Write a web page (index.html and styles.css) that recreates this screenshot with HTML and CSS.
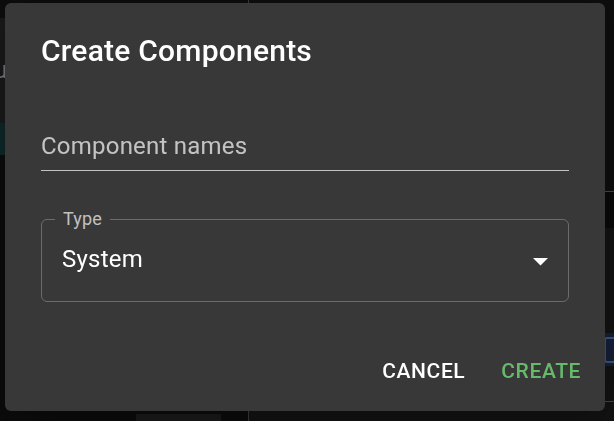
FILE: index.html
```html
<!DOCTYPE html>
<html lang="en">
<head>
<meta charset="utf-8">
<title>Create Components</title>
<link rel="stylesheet" href="styles.css">
</head>
<body>
<div class="app">
  <aside class="side">
    <div class="side-top"></div>
    <div class="side-panel"><span class="side-text">Menu</span></div>
    <div class="side-active"></div>
    <div class="side-fill"></div>
    <div class="side-foot"><div class="foot-block"></div></div>
  </aside>
  <main class="main">
    <div class="toolbar"></div>
    <div class="main-gap"></div>
    <div class="panel">
      <div class="panel-space"></div>
      <div class="panel-row"><span class="row-icon"></span></div>
      <div class="panel-space2"></div>
    </div>
  </main>
</div>

<div class="backdrop">
  <div class="dialog" role="dialog">
    <h2 class="dlg-title">Create Components</h2>
    <div class="dlg-content">
      <div class="field-std">
        <div class="std-input"><span class="std-label">Component names</span></div>
      </div>
      <div class="field-out">
        <span class="out-label">Type</span>
        <div class="select-value">System</div>
        <svg class="arrow" width="15" height="8" viewBox="0 0 15 8"><polygon points="0,0 15,0 7.5,7.5" fill="#ffffff"/></svg>
      </div>
    </div>
    <div class="dlg-actions">
      <button class="btn">Cancel</button>
      <button class="btn btn-primary">Create</button>
    </div>
  </div>
</div>
</body>
</html>
```

FILE: styles.css
```css
html, body {
  margin: 0;
  padding: 0;
  height: 100%;
}
body {
  background: #0c0c0c;
  font-family: Roboto, "Liberation Sans", sans-serif;
  overflow: hidden;
}
.app {
  display: flex;
  height: 421px;
  width: 614px;
}
.side {
  width: 248px;
  display: flex;
  flex-direction: column;
  border-right: 1px solid #3a3a3a;
  background: #0c0c0c;
}
.side-top {
  height: 18px;
  background: #0d0d0d;
}
.side-panel {
  box-sizing: border-box;
  height: 105px;
  padding-top: 40px;
  background: #1a1a1a;
  overflow: hidden;
}
.side-text {
  display: block;
  margin-left: -53px;
  font-size: 24px;
  line-height: 24px;
  color: #7a7a7a;
  white-space: nowrap;
}
.side-active {
  height: 32px;
  background: #0f2828;
}
.side-fill {
  flex: 1;
}
.side-foot {
  height: 7px;
  display: flex;
  padding-left: 136px;
}
.foot-block {
  width: 85px;
  background: #1a1a1a;
}
.main {
  flex: 1;
  display: flex;
  flex-direction: column;
}
.toolbar {
  height: 191px;
  border-bottom: 1px solid #484848;
  background: #0e0e0e;
}
.main-gap {
  height: 36px;
  background: #0a0a0a;
}
.panel {
  flex: 1;
  display: flex;
  flex-direction: column;
  background: #131313;
}
.panel-space {
  height: 105px;
}
.panel-row {
  height: 33px;
  background: #14203a;
  display: flex;
  justify-content: flex-end;
  align-items: center;
}
.row-icon {
  width: 12px;
  height: 22px;
  border: 2px solid #3d5580;
  border-radius: 3px;
  margin-right: -6px;
}
.panel-space2 {
  height: 35px;
  border-bottom: 1px solid #484848;
}

.backdrop {
  position: fixed;
  inset: 0;
  padding: 3px 0 0 5px;
  display: flex;
  align-items: flex-start;
}
.dialog {
  width: 600px;
  background: #383838;
  border-radius: 6px;
  box-shadow: 0 16px 38px 3px rgba(0,0,0,0.14), 0 6px 46px 8px rgba(0,0,0,0.12);
  color: #ffffff;
  display: flex;
  flex-direction: column;
}
.dlg-title {
  margin: 0;
  padding: 24px 36px;
  font-size: 30px;
  line-height: 48px;
  font-weight: 500;
  letter-spacing: 0.0075em;
}
.dlg-content {
  padding: 0 36px 30px;
}
.field-std {
  padding-top: 24px;
}
.std-input {
  box-sizing: border-box;
  height: 48px;
  padding: 6px 0 7.5px;
  border-bottom: 1px solid #c3c3c3;
}
.std-label {
  display: block;
  font-size: 24px;
  line-height: 34.5px;
  color: rgba(255,255,255,0.7);
  letter-spacing: 0.00938em;
}
.field-out {
  position: relative;
  margin-top: 48px;
  border: 1px solid #6b6b6b;
  border-radius: 6px;
}
.out-label {
  position: absolute;
  left: 13px;
  top: -14px;
  padding: 0 8px;
  background: #383838;
  font-size: 18px;
  line-height: 26px;
  color: rgba(255,255,255,0.7);
  letter-spacing: 0.00938em;
}
.select-value {
  padding: 22px 20px 24px;
  font-size: 24px;
  line-height: 35px;
  color: #ffffff;
  letter-spacing: 0.00938em;
}
.arrow {
  position: absolute;
  right: 20px;
  top: 38px;
}
.dlg-actions {
  display: flex;
  justify-content: flex-end;
  gap: 12px;
  padding: 12px;
}
.btn {
  font-family: Roboto, "Liberation Sans", sans-serif;
  font-size: 21px;
  line-height: 36.75px;
  font-weight: 500;
  letter-spacing: 0.02857em;
  text-transform: uppercase;
  min-width: 96px;
  padding: 9px 12px;
  border: 0;
  border-radius: 6px;
  background: transparent;
  color: #ffffff;
}
.btn-primary {
  color: #66bb6a;
}
```
